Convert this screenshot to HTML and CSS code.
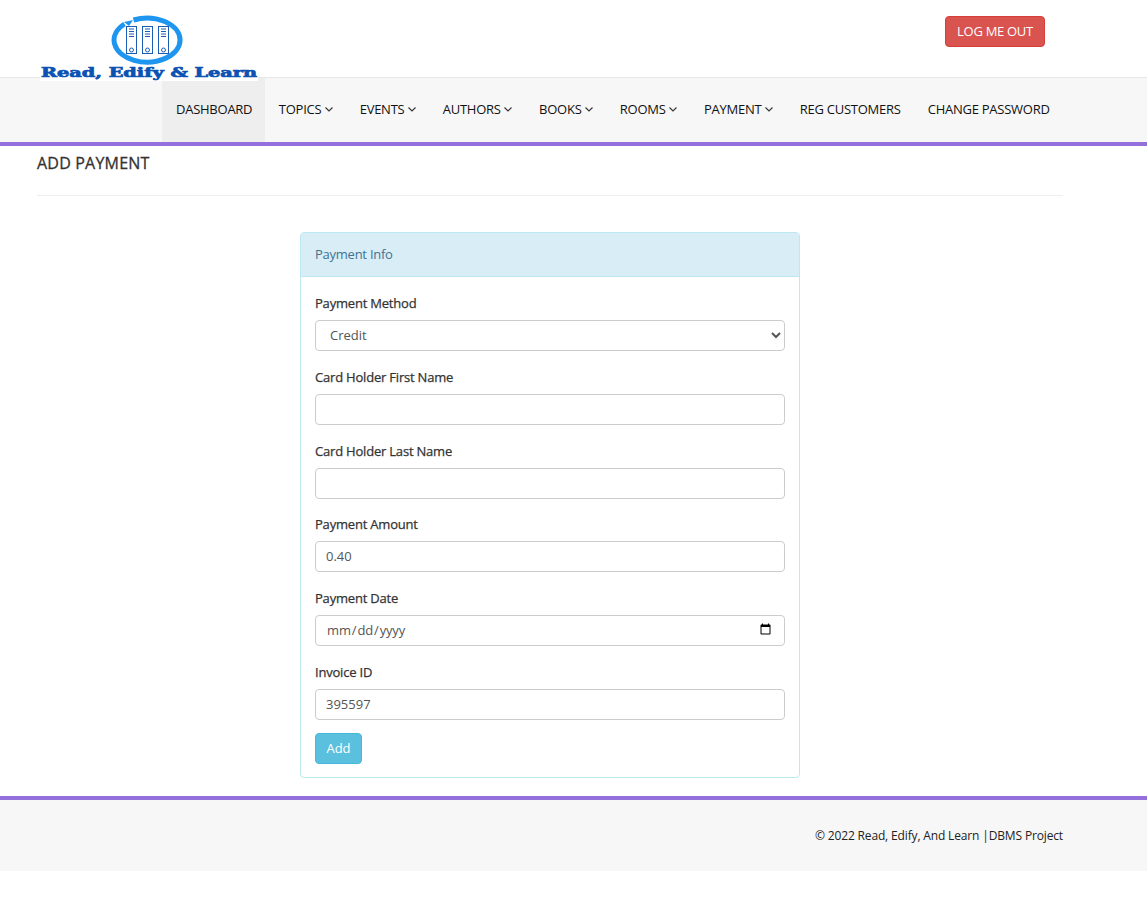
FILE: index.html
```html
<!DOCTYPE html>
<html lang="en">
    <head>
        <meta charset="utf-8">
        <title>Add Payment</title>
        <link rel="stylesheet" href="styles.css">
    </head>
    <body>
        <header class="top">
            <div class="logo">
                <svg class="logo-mark" width="74" height="50" viewBox="0 0 74 50">
                    <path d="M14.500 9a33 22 0 1 0 9-4" fill="none" stroke="#1e96f0" stroke-width="5"/>
                    <path d="M14 7l9-2-4 6z" fill="#1e96f0"/>
                    <g fill="#fff" stroke="#1a5fb4" stroke-width="1">
                        <rect x="16.500" y="11.500" width="10" height="27"/>
                        <rect x="32.500" y="11.500" width="10" height="27"/>
                        <rect x="48.500" y="11.500" width="10" height="27"/>
                        <circle cx="21.500" cy="35" r="2"/>
                        <circle cx="37.500" cy="35" r="2"/>
                        <circle cx="53.500" cy="35" r="2"/>
                        <path d="M19 14h5M19 16.500h5M19 19h5M19 21.500h5M35 14h5M35 16.500h5M35 19h5M35 21.500h5M51 14h5M51 16.500h5M51 19h5M51 21.500h5"/>
                    </g>
                </svg>
                <div class="logo-text">Read, Edify &amp; Learn</div>
            </div>
            <a class="btn-logout" href="#">LOG ME OUT</a>
        </header>

        <nav class="menu">
            <a class="active" href="#">DASHBOARD</a>
            <a href="#">TOPICS <svg class="caret" width="8" height="5" viewBox="0 0 8 5"><path d="M.5.5L4 4 7.500.5"/></svg></a>
            <a href="#">EVENTS <svg class="caret" width="8" height="5" viewBox="0 0 8 5"><path d="M.5.5L4 4 7.500.5"/></svg></a>
            <a href="#">AUTHORS <svg class="caret" width="8" height="5" viewBox="0 0 8 5"><path d="M.5.5L4 4 7.500.5"/></svg></a>
            <a href="#">BOOKS <svg class="caret" width="8" height="5" viewBox="0 0 8 5"><path d="M.5.5L4 4 7.500.5"/></svg></a>
            <a href="#">ROOMS <svg class="caret" width="8" height="5" viewBox="0 0 8 5"><path d="M.5.5L4 4 7.500.5"/></svg></a>
            <a href="#">PAYMENT <svg class="caret" width="8" height="5" viewBox="0 0 8 5"><path d="M.5.5L4 4 7.500.5"/></svg></a>
            <a href="#">REG CUSTOMERS</a>
            <a href="#">CHANGE PASSWORD</a>
        </nav>

        <main class="content">
            <h1 class="page-title">ADD PAYMENT</h1>
            <div class="panel">
                <div class="panel-heading">Payment Info</div>
                <form class="panel-body">
                    <div class="form-group">
                        <label for="method">Payment Method</label>
                        <select id="method" class="form-control"><option>Credit</option><option>Debit</option></select>
                    </div>
                    <div class="form-group">
                        <label for="first">Card Holder First Name</label>
                        <input id="first" class="form-control" type="text">
                    </div>
                    <div class="form-group">
                        <label for="last">Card Holder Last Name</label>
                        <input id="last" class="form-control" type="text">
                    </div>
                    <div class="form-group">
                        <label for="amount">Payment Amount</label>
                        <input id="amount" class="form-control" type="text" value="0.40">
                    </div>
                    <div class="form-group">
                        <label for="date">Payment Date</label>
                        <input id="date" class="form-control" type="date">
                    </div>
                    <div class="form-group last">
                        <label for="invoice">Invoice ID</label>
                        <input id="invoice" class="form-control" type="text" value="395597">
                    </div>
                    <button class="btn-add" type="button">Add</button>
                </form>
            </div>
        </main>

        <footer class="foot">
            <p>&copy; 2022 Read, Edify, And Learn |DBMS Project</p>
        </footer>
    </body>
</html>
```
FILE: styles.css
```css
* {
    box-sizing: border-box;
}
body {
    margin: 0;
    background-color: #fff;
    color: #333;
    font-family: "Open Sans", sans-serif;
    font-size: 13px;
    line-height: 1.43;
}
a {
    text-decoration: none;
}
.top {
    height: 78px;
    padding: 15px 102px 0 40px;
    display: flex;
    justify-content: space-between;
    align-items: flex-start;
    border-bottom: 1px solid #e7e7e7;
}
.logo {
    position: relative;
    width: 218px;
    height: 66px;
    background-color: #fff;
}
.logo-mark {
    display: block;
    margin: 0 0 0 70px;
}
.logo-text {
    font-family: "DejaVu Serif", serif;
    font-weight: bold;
    font-size: 13px;
    line-height: 15px;
    text-align: center;
    color: #0b52b3;
    white-space: nowrap;
    transform: scaleX(1.483);
    -webkit-text-stroke: 0.7px #0b52b3;
}
.btn-logout {
    margin-top: 1px;
    width: 100px;
    height: 31px;
    line-height: 28px;
    text-align: center;
    color: #fff;
    background-color: #d9534f;
    border: 1px solid #d43f3a;
    border-radius: 4px;
    font-size: 13px;
    letter-spacing: -0.3px;
}
.menu {
    height: 68px;
    padding: 0 0 0 162px;
    display: flex;
    background-color: #f7f7f7;
    border-bottom: 4px solid #9370db;
}
.menu a {
    height: 64px;
    padding: 0 13.500px;
    line-height: 63px;
    color: #111;
    letter-spacing: -0.25px;
    white-space: nowrap;
}
.menu a.active {
    padding: 0 13px 0 14px;
    background-color: #eee;
}
.caret {
    fill: none;
    stroke: #333;
    stroke-width: 1.100;
    vertical-align: 2px;
    margin-left: 0.2px;
}
.content {
    padding: 0 84px 0 37px;
}
.page-title {
    margin: 0 0 36px;
    padding: 6px 0 20px;
    font-size: 16px;
    line-height: 23px;
    font-weight: 400;
    color: #333;
    letter-spacing: 0.2px;
    -webkit-text-stroke: 0.3px #333;
    border-bottom: 1px solid #eee;
}
.panel {
    width: 500px;
    margin: 0 0 18px 263px;
    border: 1px solid #bce8f1;
    border-radius: 4px;
}
.panel-heading {
    height: 44px;
    padding: 0 14px;
    line-height: 42px;
    color: #3f7390;
    background-color: #d9edf7;
    border-bottom: 1px solid #bce8f1;
    border-radius: 3px 3px 0 0;
    letter-spacing: -0.25px;
}
.panel-body {
    padding: 17px 14px 13px;
}
.form-group {
    margin-bottom: 16.850px;
}
.form-group.last {
    margin-bottom: 13px;
}
.form-group label {
    display: block;
    height: 18.200px;
    margin-bottom: 7.800px;
    font-weight: 400;
    line-height: 18.200px;
    letter-spacing: -0.2px;
    -webkit-text-stroke: 0.25px #333;
}
.form-control {
    display: block;
    width: 100%;
    height: 31px;
    padding: 0 10px 1px;
    font-family: "Open Sans", sans-serif;
    font-size: 13px;
    color: #555;
    background-color: #fff;
    border: 1px solid #ccc;
    border-radius: 4px;
}
input.form-control {
    padding-bottom: 2px;
}
input[type="date"] {
    letter-spacing: -0.15px;
}
.btn-add {
    display: block;
    width: 47px;
    height: 31px;
    padding: 0 0 2px;
    font-family: "Open Sans", sans-serif;
    font-size: 13px;
    color: #fff;
    background-color: #5bc0de;
    border: 1px solid #46b8da;
    border-radius: 4px;
}
.foot {
    height: 75px;
    padding: 0 84px 0 0;
    background-color: #f7f7f7;
    border-top: 4px solid #9370db;
    text-align: right;
}
.foot p {
    margin: 0;
    padding-top: 27px;
    font-size: 12px;
    line-height: 18px;
    color: #222;
    letter-spacing: -0.15px;
}
```
